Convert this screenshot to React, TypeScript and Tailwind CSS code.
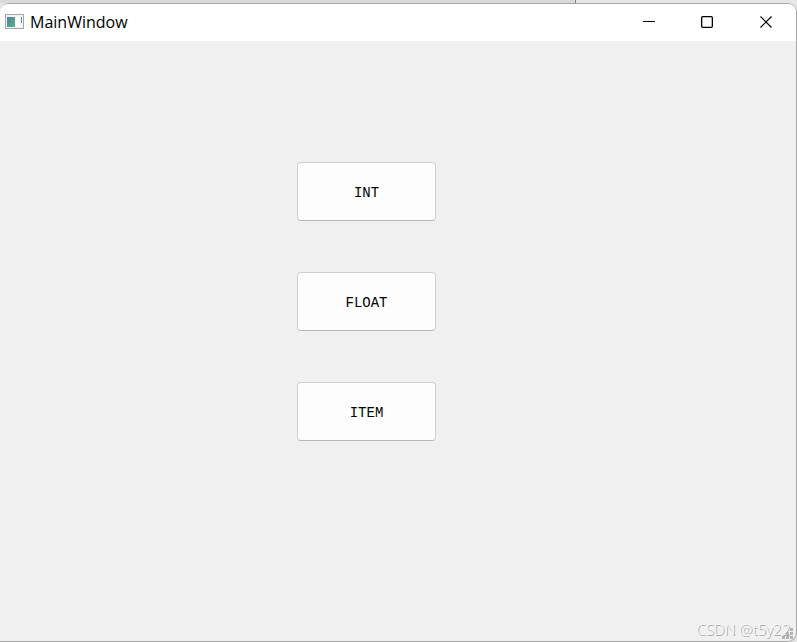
const actions = ["INT", "FLOAT", "ITEM"];

function AppIcon() {
  return (
    <svg width="20" height="16" viewBox="0 0 20 16" shapeRendering="crispEdges" aria-hidden="true">
      <defs>
        <linearGradient id="pane" x1="0" y1="0" x2="1" y2="1">
          <stop offset="0" stopColor="#4a7fa0" />
          <stop offset="1" stopColor="#5bb585" />
        </linearGradient>
      </defs>
      <rect x="0" y="0" width="19" height="15" fill="#a3a7ad" />
      <rect x="1" y="1" width="17" height="13" fill="#f2f3f4" />
      <rect x="2" y="3" width="8" height="10" fill="url(#pane)" />
      <rect x="11" y="3" width="4" height="10" fill="#ffffff" />
      <rect x="16" y="3" width="1" height="6" fill="url(#pane)" />
    </svg>
  );
}

function TitleBar() {
  return (
    <header className="flex h-[37px] items-center bg-white pb-[2px] pl-[5px]">
      <AppIcon />
      <h1 className="ml-[5px] flex-1 font-['Open_Sans','Noto_Sans',sans-serif] text-[16px] leading-6 text-black">MainWindow</h1>
      <div className="flex h-full text-black">
        <button type="button" aria-label="Minimize" className="flex w-[58px] items-center justify-center">
          <svg width="12" height="12" viewBox="0 0 12 12" shapeRendering="crispEdges">
            <rect x="0" y="5" width="12" height="1" fill="currentColor" />
          </svg>
        </button>
        <button type="button" aria-label="Maximize" className="flex w-[58px] items-center justify-center">
          <svg width="12" height="12" viewBox="0 0 12 12" fill="none" stroke="currentColor" strokeWidth="1.3">
            <rect x="0.65" y="0.65" width="10.7" height="10.7" rx="1" />
          </svg>
        </button>
        <button type="button" aria-label="Close" className="flex w-[60px] items-center justify-center">
          <svg width="12" height="12" viewBox="0 0 12 12" fill="none" stroke="currentColor" strokeWidth="1.2">
            <path d="M0.5 0.5l11 11M11.5 0.5l-11 11" />
          </svg>
        </button>
      </div>
    </header>
  );
}

function SizeGrip() {
  return (
    <svg className="absolute right-[3px] bottom-[2px]" width="11" height="11" viewBox="0 0 11 11" fill="#b4b4b4" aria-hidden="true">
      <path d="M8 0h3v3h-3zM4 4h3v3h-3zM8 4h3v3h-3zM0 8h3v3h-3zM4 8h3v3h-3zM8 8h3v3h-3z" />
    </svg>
  );
}

export default function App() {
  return (
    <div className="flex min-h-screen flex-col bg-[#e6e6e6]">
      {/* Edge of the window behind */}
      <div className="flex h-[3px]">
        <div className="w-[576px] border-r border-[#808080] bg-[#d9d9d9]"></div>
      </div>

      <div className="relative flex flex-1 flex-col overflow-hidden rounded-t-[9px] rounded-br-[9px] border-t border-r border-b border-[#a8a8a8] bg-[#f0f0f0]">
        <TitleBar />
        <main className="flex flex-1 flex-col items-center gap-[51px] pt-[121px] pr-[63px]">
          {actions.map((label) => (
            <button
              key={label}
              type="button"
              className="h-[59px] w-[139px] rounded-[4px] border border-[#d0d0d0] border-b-[#b8b8b8] bg-[#fdfdfd] pt-[2px] font-['Liberation_Mono',monospace] text-[14px] leading-4 text-black hover:bg-[#f5f5f5]"
            >
              {label}
            </button>
          ))}
        </main>
        <p className="absolute right-[6px] bottom-[2px] font-['Open_Sans',sans-serif] text-[15px] leading-5 font-light whitespace-pre text-[#f8f8f8] [text-shadow:1px_1px_0px_#a0a0a0]">
          CSDN @t5y22
        </p>
        <SizeGrip />
      </div>
    </div>
  );
}
